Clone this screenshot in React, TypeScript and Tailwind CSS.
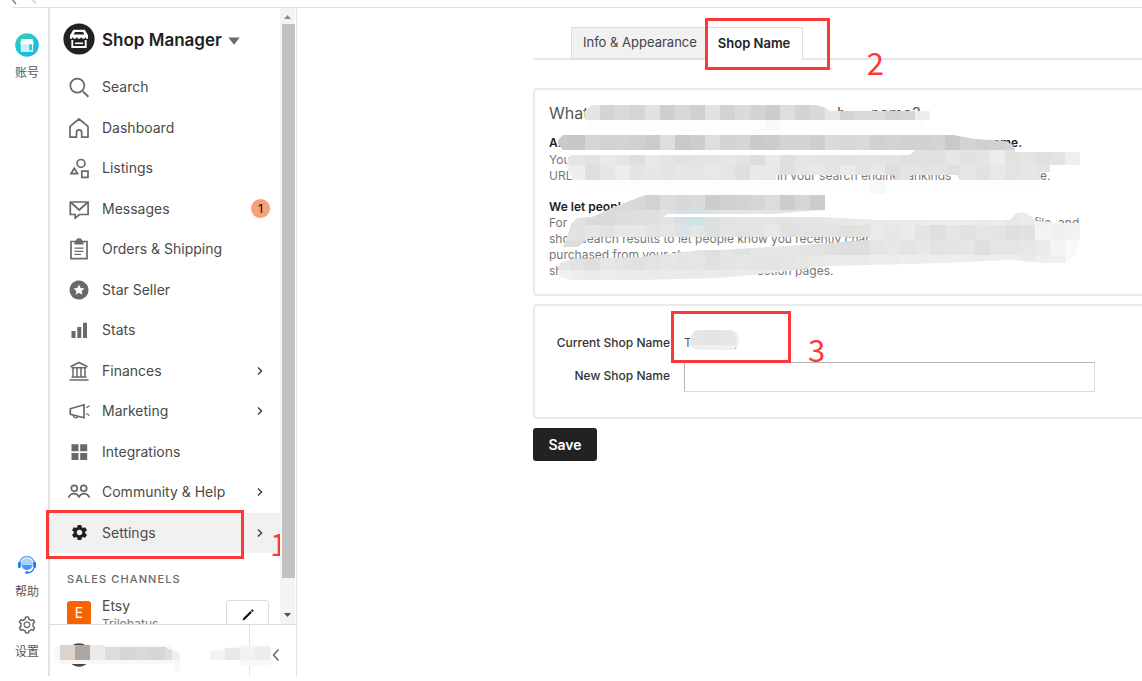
import type { ReactNode } from "react";
import { MdSettings } from "react-icons/md";
import { AiOutlineSetting } from "react-icons/ai";

function Icon({ children }: { children: ReactNode }) {
  return (
    <svg
      viewBox="0 0 24 24"
      className="size-6 shrink-0 text-[#696969]"
      fill="none"
      stroke="currentColor"
      strokeWidth="1.7"
      aria-hidden="true"
    >
      {children}
    </svg>
  );
}

const starPoints = "12,6.4 13.6,10 17.5,10.4 14.6,13 15.4,16.8 12,14.8 8.6,16.8 9.4,13 6.5,10.4 10.4,10";

const navItems: { label: string; icon: ReactNode; more?: boolean; badge?: number; active?: boolean }[] = [
  {
    label: "Search",
    icon: (
      <Icon>
        <circle cx="10.3" cy="10.6" r="7" />
        <path d="M15.8 16.4 21.4 21.8" strokeWidth="2" />
      </Icon>
    ),
  },
  {
    label: "Dashboard",
    icon: (
      <Icon>
        <path d="M3 10.4 12 3l9 7.4V21.2h-6.300V16.500a2.600 2.600 0 0 0-5.200 0v4.700H3z" strokeLinejoin="round" />
      </Icon>
    ),
  },
  {
    label: "Listings",
    icon: (
      <Icon>
        <circle cx="14" cy="7.400" r="3.900" />
        <path d="M7.300 12.200 10.600 17.700H4z" />
        <path d="M14.800 15.200h6.200v6.200h-6.200z" />
      </Icon>
    ),
  },
  {
    label: "Messages",
    badge: 1,
    icon: (
      <Icon>
        <path d="M3.300 5h17.800v12.500h-8.600L8.200 21v-3.500H3.300z" />
        <path d="m4 5.500 8.200 7.500 8.200-7.500" />
      </Icon>
    ),
  },
  {
    label: "Orders & Shipping",
    icon: (
      <Icon>
        <path d="M4 4.500h16v17.200H4z" />
        <path d="M7.500 7.500V4.800h2a2.600 2.600 0 0 1 5 0h2v2.700z" fill="currentColor" stroke="none" />
        <path d="M9.500 4.600a2.500 2.500 0 0 1 5 0" />
        <path d="M7.500 11.200h9M7.500 14.300h9M7.500 17.300h6.500" strokeWidth="1.300" />
      </Icon>
    ),
  },
  {
    label: "Star Seller",
    icon: (
      <Icon>
        <circle cx="12" cy="12" r="8.200" fill="currentColor" stroke="none" />
        <circle cx="12" cy="12" r="8.200" strokeWidth="2.600" strokeDasharray="3.200 1.090" strokeLinecap="round" />
        <polygon points={starPoints} fill="#fff" stroke="none" />
      </Icon>
    ),
  },
  {
    label: "Stats",
    icon: (
      <Icon>
        <path d="M4.500 13h4v7h-4zM10.300 9h4v11h-4zM16 4.800h4V20h-4z" fill="currentColor" stroke="none" />
      </Icon>
    ),
  },
  {
    label: "Finances",
    more: true,
    icon: (
      <Icon>
        <path d="M3.500 7.800 12 3.500l8.500 4.300" />
        <path d="M4.500 8.800h15M6 9v8.500M10 9v8.500M14 9v8.500M18 9v8.500M4.500 18h15M2.500 21h19" strokeWidth="1.500" />
      </Icon>
    ),
  },
  {
    label: "Marketing",
    more: true,
    icon: (
      <Icon>
        <path d="M3.300 9.800 17 5.800v12.900L3.300 15.300z" />
        <path d="M6.200 16.500a2.600 2.600 0 0 0 4.900 1M19.300 8.800l3.200-2M19.300 14.500l3.200 2" strokeWidth="1.300" />
      </Icon>
    ),
  },
  {
    label: "Integrations",
    icon: (
      <Icon>
        <path
          d="M4.500 4.300h7v6.900h-7zM13.200 4.300h7v6.900h-7zM4.500 13h7v6.900h-7zM13.200 13h7v6.900h-7z"
          fill="currentColor"
          stroke="none"
        />
      </Icon>
    ),
  },
  {
    label: "Community & Help",
    more: true,
    icon: (
      <Icon>
        <circle cx="7.300" cy="8.300" r="3" />
        <circle cx="16.700" cy="8.300" r="3" />
        <path d="M1.500 17.600c1.200-2.800 3.500-4 5.600-4s3.800 1.200 4.900 3.200c1.100-2 2.800-3.200 4.900-3.200s4.400 1.200 5.600 4" />
      </Icon>
    ),
  },
  {
    label: "Settings",
    more: true,
    active: true,
    icon: (
      <span className="flex size-6 shrink-0 items-center justify-center text-[#1f1f1f]">
        <MdSettings className="size-[19px]" aria-hidden="true" />
      </span>
    ),
  },
];

/* Pixelated strokes: rows of 15px tiles starting at x, cut to a hand-drawn outline. */
type TileRow = { x: number; y: number; tones: string[] };

const titleTiles: TileRow = {
  x: 585, y: 105,
  tones: ["e3e5e2", "d4d4d3", "dcdad9", "d5d6d4", "e1e3e2", "cfcfcf", "d8d8d8", "d0d0cf", "e1e2e1", "d3d3d3", "d9dcdb", "d3d3d3", "cdcdcc", "dedede", "d3d3d3", "d8d8d8", "e5e5e5", "d4d4d2", "dadcda", "d9dad9", "d2d2d1", "d4d5d5", "eeeeee"],
};

const bodyTiles: TileRow[] = [
  { x: 555, y: 135, tones: ["c9c9cb", "c5c8c6", "d8d6d5", "d2d2d3", "d3d2d5", "d0d0d2", "cbcbcc", "dedede", "c9c9c9", "cbcecc", "dedede", "d3d3d3", "d6d6d6", "cacaca", "cccccc", "d3d3d3", "d6d4d3", "cfcfcf", "dbdbdb", "d6d8d7", "d9dad9", "d1d0d2", "d4d4cf", "d1d1d0", "d2d0d0", "d4d4d4", "c9c9cd", "d3d3d3", "d0d0d0", "d1d1d1", "d3d3d3"] },
  { x: 555, y: 150, tones: ["ebebea", "e5e5e4", "e2e4e3", "e8eaea", "e5e6e4", "dedede", "e8e8e8", "e5e5e5", "e3e3e3", "e4e4e4", "e4e4e3", "e7e7e7", "e4e4e4", "dededc", "e8eaea", "e0e0df", "e5e5e5", "e4e4e3", "e4e4e4", "e2e2e2", "e4e4e4", "e4e4e4", "e3e3e3", "e0e0e0", "e1e1e1", "e0e0e1", "e6e7e7", "e2e2e2", "e4e4e4", "ececec", "e2e2e0", "e4e4e3", "e0e0e0", "e3e3e3", "efefee"] },
  { x: 555, y: 165, tones: ["efefee", "eeeeec", "dededf", "e6e6e6", "ececea", "e4e4e3", "e6e6e6", "e4e5e3", "e7e7e6", "e5e5e5", "e8e8e6", "e5e5e5", "dde0e0", "e8eaea", "e8e8e8", "dfdfdd", "e6e6e6", "e8e8e8", "e4e4e4", "ebebe9", "e4e4e3", "e8eaea", "deded9", "e4e4e4", "e2e4e3", "e5e5e5", "e0e0dd", "e6e6e6", "e2e2e1", "e8e8e8", "e3e3e3", "e6e6e4", "e4e4e4"] },
  { x: 555, y: 195, tones: ["dddddd", "dddddd", "dddddd", "dcdcdc", "dadada", "d7d7d7", "d2d2d5", "dcdcdc", "d8d8d8", "dadcda", "cccccc", "d0d0d0", "d2d2d2", "d4d6d4", "dcdcdc", "cccccc", "d5d5d5", "cbcbcc"] },
  { x: 555, y: 210, tones: ["e7e7e7", "e2e2e2", "dadada", "dbdbdb", "dddddd", "dedede", "dfdfdf", "e3e3e3", "d4e0e2", "cee3e6", "dde1e1", "e2e2e2", "e5e5e3", "e5e5e5", "e4e4e4", "e3e3e3", "e5e5e5", "e6e6e6", "e8e8e8", "e7e7e7", "e9e9e9", "e9e9e9", "ebebeb", "ebebeb", "ebebeb", "ececec", "ececec", "ececec", "ebebeb", "ececec", "e8e8e8", "ebebeb", "f0f0f0", "f1f1f1", "f2f2f2"] },
  { x: 555, y: 225, tones: ["e3e3e3", "e2e2e2", "e5e5e5", "e2e2e2", "e7e7e6", "e8e8e8", "e4e4e4", "e6e6e6", "dce3e4", "e0e6e5", "dce0df", "e4e6e6", "e2e2e2", "e4e4e4", "e8e8e8", "e1e1e1", "e2e2e2", "e3e3e3", "e3e3e3", "e0e0e0", "e2e2de", "eaeaea", "e6e7e7", "ebebe9", "e4e4e4", "dedfdf", "e5e5e5", "e1e1e1", "e5e5e5", "e4e4e4", "dfdfe0", "e1e1df", "f1f4f4", "f0f0ef", "f3f3f3"] },
  { x: 555, y: 240, tones: ["dddddd", "dedede", "e2e2e2", "e4e4e4", "e6e6e6", "e5e5e5", "e6e6e6", "e8e8e8", "e6e6e6", "e4e4e4", "dedede", "e4e4e4", "e1e1e0", "e5e5e4", "e7e7e7", "e6e6e6", "e4e4e4", "e3e3e3", "dfdfdf", "dddddd", "dedede", "e5e5e5", "e7e7e6", "e4e4e4", "e7e7e7", "e3e3e3", "e4e4e4", "e6e6e6", "dedfdf", "e5e6e6", "e4e5e5", "e6e7e7", "eaeaea", "f4f4f4", "f9f9f9"] },
  { x: 555, y: 255, tones: ["e6e6e6", "e2e2e2", "dededd", "e6e6e6", "e3e3e3", "e0e0e0", "e3e3e3", "e6e6e6", "e4e4e3", "e6e6e6", "e1e1e1", "e4e4e4", "e6e6e6", "e4e4e4", "e4e4e4", "e5e5e5", "e7e7e6", "e8e8e8", "eaeaea", "ebebe9", "eaeaea", "ecedec", "ececea", "eeeeed", "ecedec", "ededed", "eeeeed", "ecedec", "ededed", "eceded", "ecedec", "eaeae8", "eeeeee", "efefed", "f8f8f8"] },
  { x: 555, y: 270, tones: ["f0f0f0", "eeeeed", "eaeaea", "ecedec", "eaebea", "ebebeb", "ebecea", "e9eae9", "ebebe9", "eceae9", "ebebe9", "e9e9e8", "ebebeb", "e9e9e8", "efefef", "f0f0f0", "f2f2f2", "f2f2f2"] },
];

function Tiles({ rows }: { rows: TileRow[] }) {
  return (
    <>
      {rows.map((row) =>
        row.tones.map((tone, i) => (
          <rect key={`${row.y}-${i}`} x={row.x + i * 15} y={row.y} width="15" height="15" fill={`#${tone}`} />
        )),
      )}
    </>
  );
}

function NoticeMosaic() {
  return (
    <svg
      viewBox="533 88 609 208"
      className="pointer-events-none absolute top-0 left-0 h-[208px] w-[609px]"
      shapeRendering="crispEdges"
      aria-hidden="true"
    >
      <defs>
        <clipPath id="title-stroke">
          <path d="M592 105H816L826 108 830 111H930V120H585V111z" />
        </clipPath>
        <clipPath id="body-stroke">
          <path d="M563 135H953L975 139 1005 141 1013 145 1015 150V152H1080V165H1050V172H1040V180H960L957 175H910V180H895V175H776V180H573L566 165 570 155H910L915 150H563L558 144V140z" />
          <path d="M645 195H825V210L770 214H668L663 217H820L862 219 875 220H1010L1015 214 1022 212 1028 214 1037 221 1060 223H1080V240L1075 255 1065 263 1045 263 1010 260 945 263 830 266 760 274 720 278 640 280H572L560 277 558 270 560 263 572 259 640 257 700 250H720L800 245 870 240V237H590L578 247 563 247 566 240 571 224 577 218 592 217 614 207z" />
        </clipPath>
      </defs>
      <path d="M588 120H925V131H588zM575 180H1040V190H575zM843 106H872V111H843z" fill="#fdfdfd" />
      <path d="M765 120h15v10h-15zM870 180h15v14h-15z" fill="#f8f8f8" />
      <g clipPath="url(#title-stroke)">
        <Tiles rows={[titleTiles]} />
      </g>
      <g clipPath="url(#body-stroke)">
        <Tiles rows={bodyTiles} />
      </g>
    </svg>
  );
}

function Highlight({ className }: { className: string }) {
  return <span className={`pointer-events-none absolute z-10 border-3 border-[#fc3838] ${className}`} />;
}

function StepNumber({ value, className }: { value: number; className: string }) {
  return (
    <span
      className={`pointer-events-none absolute z-10 font-['Noto_Sans_CJK_SC',sans-serif] text-[31px] leading-8 font-normal text-[#fc3838] ${className}`}
    >
      {value}
    </span>
  );
}

function Rail() {
  return (
    <aside className="flex w-12 shrink-0 flex-col items-center pt-[25px] pb-[17px] pl-1.5 font-['Noto_Sans_CJK_SC',sans-serif] text-xs leading-4 text-[#555]">
      <a href="#account" className="flex flex-col items-center gap-[7px]">
        <svg viewBox="0 0 24 24" className="size-6" aria-hidden="true">
          <defs>
            <linearGradient id="account" x1="0" y1="0" x2="0.6" y2="1">
              <stop offset="0" stopColor="#30d3b0" />
              <stop offset="1" stopColor="#18b9ec" />
            </linearGradient>
          </defs>
          <circle cx="12" cy="12" r="11.800" fill="url(#account)" />
          <path d="M6.500 6h11l1.200 4.500H5.300z" fill="#fff" />
          <path d="M6.500 11v7h11v-7" fill="none" stroke="#e9fbfd" strokeWidth="1.300" />
          <path d="M7 10.500h7.300V18H7z" fill="#c9f1f5" />
          <path d="M5.300 10.500h13.400" stroke="#fff" strokeWidth="1.500" />
        </svg>
        账号
      </a>
      <a href="#help" className="mt-auto flex flex-col items-center gap-2">
        <svg viewBox="0 0 20 20" className="size-5" aria-hidden="true">
          <path d="M2.500 9a7.500 7.500 0 0 1 15 0" fill="none" stroke="#62a5f8" strokeWidth="1.500" />
          <rect x="1" y="7" width="2.800" height="6" rx="1.300" fill="#1f78f4" />
          <rect x="16.200" y="7" width="2.800" height="6" rx="1.300" fill="#1f78f4" />
          <circle cx="10" cy="9.300" r="6" fill="#a9d0ff" />
          <path d="M5 10h10a5 5 0 0 1-10 0z" fill="#4a94f7" />
          <path d="M17 13c-1 3-3 4.500-6 4.700" fill="none" stroke="#1f78f4" strokeWidth="1.200" />
          <rect x="8.300" y="16.300" width="3.600" height="2.500" rx="1.200" fill="#1f78f4" />
        </svg>
        帮助
      </a>
      <a href="#preferences" className="mt-4 flex flex-col items-center gap-2">
        <AiOutlineSetting className="size-5 text-[#666]" aria-hidden="true" />
        设置
      </a>
    </aside>
  );
}

function Chevron() {
  return (
    <svg viewBox="0 0 8 10" className="h-[10px] w-2" fill="none" stroke="#444" strokeWidth="1.500" aria-hidden="true">
      <path d="m2 1.500 3.600 3.500L2 8.500" />
    </svg>
  );
}

function Sidebar() {
  return (
    <div className="flex w-[249px] shrink-0 flex-col border-r border-l-2 border-[#e2e2e2]">
      <div className="flex min-h-0 flex-1 pr-px">
        <div className="flex min-w-0 flex-1 flex-col">
          <button type="button" className="flex h-[59px] shrink-0 items-center gap-1.5 pt-[3px] pl-[13px]">
            <svg viewBox="0 0 32 32" className="size-8 shrink-0" aria-hidden="true">
              <circle cx="16" cy="16" r="15.600" fill="#222" />
              <path d="M10.300 6.800h11.400l3.300 5.400v3.600H7v-3.600z" fill="#fff" />
              <path d="M12 9h8l1.400 2.600H10.600z" fill="#222" />
              <path d="M9.300 17v7h13.400v-7" fill="none" stroke="#fff" strokeWidth="1.900" />
              <path d="M9.500 14.500a2 2 0 0 0 4.300 0 2.200 2.200 0 0 0 4.400 0 2 2 0 0 0 4.300 0" fill="none" stroke="#222" strokeWidth="1.100" />
              <path d="M12 20.300h8" stroke="#fff" strokeWidth="1.600" />
            </svg>
            <span className="pt-1 pl-px text-[17px] font-semibold text-[#222]">Shop Manager</span>
            <svg viewBox="0 0 12 8" className="mt-[3px] h-2 w-3" aria-hidden="true">
              <path d="M.3.500h11.400L6 7.700z" fill="#696969" />
            </svg>
          </button>
          <nav className="grid h-[486px] shrink-0 auto-rows-fr">
            {navItems.map((item) => (
              <a
                key={item.label}
                href="#nav"
                className={`relative flex items-center gap-[11px] pr-4 pl-[17px] text-sm text-[#4a4a4a] ${item.active ? "bg-[#f1f1f1]" : ""}`}
              >
                {item.icon}
                <span className="flex-1 whitespace-nowrap">{item.label}</span>
                {item.more && <Chevron />}
                {item.badge && (
                  <span className="-mr-1.5 flex size-[19px] items-center justify-center rounded-full bg-[#f99f79] text-xs font-medium text-[#222]">
                    {item.badge}
                  </span>
                )}
                {item.active && (
                  <>
                    <Highlight className="-top-[3px] -left-1 h-[49px] w-[198px]" />
                    <StepNumber value={1} className="top-[14px] right-0 w-[10px] overflow-hidden" />
                  </>
                )}
              </a>
            ))}
          </nav>
          <div className="min-h-0 flex-1 overflow-hidden pt-[18px]">
            <h2 className="pl-[17px] text-[11px] leading-4 font-medium tracking-widest text-[#696969]">SALES CHANNELS</h2>
            <div className="flex items-start pt-2.5 pr-[11px] pl-[17px]">
              <span className="mt-1 flex size-6 items-center justify-center rounded-[3px] bg-[#f56400] text-sm text-white">E</span>
              <a href="#etsy" className="ml-[11px] flex-1 text-sm leading-[18px] text-[#4a4a4a]">
                <span className="block">Etsy</span>
                <span className="block text-xs leading-[18px] text-[#777]">Trilobatus</span>
              </a>
              <button
                type="button"
                aria-label="Edit shop"
                className="mt-[3px] flex h-[30px] w-[43px] items-center justify-center rounded-[3px] border border-[#dcdcdc]"
              >
                <svg viewBox="0 0 14 14" className="size-[14px]" aria-hidden="true">
                  <path d="M1.500 12.500 2.300 10 9.500 3 11 4.500 3.800 11.700zM10 2.300l1.200-1.100 1.700 1.600-1.200 1.100z" fill="#111" />
                </svg>
              </button>
            </div>
          </div>
        </div>
        <div className="flex w-[15px] shrink-0 flex-col items-center bg-[#f3f3f3]">
          <svg viewBox="0 0 15 16" className="h-4 w-[15px]" aria-hidden="true">
            <path d="M4 11 7.500 7 11 11z" fill="#8a8a8a" />
          </svg>
          <div className="ml-px h-[554px] w-[13px] bg-[#c1c1c1]" />
          <svg viewBox="0 0 15 16" className="mt-auto mb-px h-4 w-[15px]" aria-hidden="true">
            <path d="M4 6h7L7.500 10z" fill="#4d4d4d" />
          </svg>
        </div>
      </div>
      <div className="relative flex h-[52px] shrink-0 border-t border-[#dcdcdc]">
        <div className="flex-1" />
        <button type="button" aria-label="Collapse menu" className="flex w-[47px] items-center border-l border-[#e2e2e2] pt-2 pl-[17px]">
          <svg viewBox="0 0 14 14" className="size-[14px]" fill="none" stroke="#666" strokeWidth="1.600" aria-hidden="true">
            <path d="M5 1v12M11.500 1.500 6.500 7l5 5.500" />
          </svg>
        </button>
        <svg viewBox="50 625 225 50" className="pointer-events-none absolute top-0 left-0 h-[50px] w-[225px]" aria-hidden="true">
          <circle cx="79" cy="655" r="11.700" fill="#4a4743" />
          <g shapeRendering="crispEdges">
            <path d="M53 650 60 645H170L180 654V671H175V664H60L54 657zM244 645H268L273 650V663L265 666H240V660H210V651z" fill="#f8f8f8" />
            <path d="M60 645h15v15H60z" fill="#ddd3cd" />
            <path d="M75 645h15v15H75z" fill="#aca7a3" />
            <path d="M90 645h15v15H90z" fill="#ebebeb" />
            <path d="M105 647h15v13h-15z" fill="#dcdcda" />
            <path d="M120 647h45v13h-45z" fill="#d4d7d6" />
            <path d="M135 647h15v13h-15z" fill="#d8dad8" />
            <path d="M165 647 172 650V660H165z" fill="#dedede" />
            <path d="M172 650 180 654V660H172z" fill="#eeeeee" />
            <path d="M210 651h15v9h-15z" fill="#f4f2ef" />
            <path d="M225 648h15v12h-15z" fill="#e8e8e7" />
            <path d="M240 647h15v13h-15z" fill="#f2f2f2" />
            <path d="M255 647h15v13h-15z" fill="#ebecec" />
          </g>
        </svg>
      </div>
    </div>
  );
}

function Main() {
  return (
    <main className="min-w-0 flex-1 overflow-hidden pt-[19px] pl-[236px]">
      <div className="flex h-[33px] items-stretch text-[13px]">
        <span className="w-[38px] border-b-2 border-[#e8e8e8]" />
        <a
          href="#info"
          className="flex items-center border-t border-b-2 border-l border-[#dedede] bg-[#f1f1f1] pr-2 pl-[11px] whitespace-nowrap text-[#444]"
        >
          Info &amp; Appearance
        </a>
        <a
          href="#name"
          className="relative flex items-center border-x border-t border-[#dedede] px-3 font-semibold whitespace-nowrap text-[#222]"
        >
          Shop Name
          <Highlight className="-top-[10px] -left-px h-[52px] w-[125px]" />
          <StepNumber value={2} className="top-[18px] left-[161px]" />
        </a>
        <span className="flex-1 border-b-2 border-[#e8e8e8]" />
      </div>

      <section className="relative mt-7 h-[208px] overflow-hidden rounded-l border-y-2 border-l-2 border-[#ebebeb] pt-[13px] pl-[14px] text-xs leading-4 whitespace-nowrap text-[#777]">
        <h1 className="flex text-base leading-5 text-[#555]">
          <span className="w-[288px]">What</span>
          <span>hop name?</span>
        </h1>
        <p className="mt-3 flex font-semibold text-[#222]">
          <span className="w-[437px]">A.</span>
          <span>name.</span>
        </p>
        <p className="mt-px">You</p>
        <p className="flex">
          <span className="w-[228px]">URLs</span>
          <span className="w-[263px]">in your search engine rankings</span>
          <span>e.</span>
        </p>
        <p className="mt-[15px] font-semibold text-[#222]">We let people</p>
        <p className="flex">
          <span className="w-[485px]">For</span>
          <span>file, and</span>
        </p>
        <p>shop search results to let people know you recently chan</p>
        <p>purchased from your sh</p>
        <p className="flex">
          <span className="w-[208px]">sh</span>
          <span>action pages.</span>
        </p>
      </section>
      <div className="relative">
        <div className="absolute -top-[208px] left-0">
          <div className="relative h-[208px] w-[609px]">
            <NoticeMosaic />
          </div>
        </div>
      </div>

      <form onSubmit={(event) => event.preventDefault()}>
        <div className="mt-2 flex flex-col rounded-l border-y-2 border-l-2 border-[#ebebeb] pt-[22px] pr-[47px] pb-[25px] text-xs font-medium text-[#333]">
          <div className="flex h-[30px] items-center gap-[14px]">
            <span className="w-[135px] text-right whitespace-nowrap">Current Shop Name</span>
            <span className="relative flex h-[30px] w-[60px] items-center font-normal text-[#555]">
              <span className="w-[50px]">T.</span>
              <span>,</span>
              <svg viewBox="0 0 50 20" className="pointer-events-none absolute top-[2px] left-[6px] h-5 w-[50px]" aria-hidden="true">
                <rect width="49" height="20" rx="9" fill="#f0f0f0" />
                <path d="M7 0H40Q47 3 47 15H0Q0 3 7 0z" fill="#e6e6e6" />
                <path d="M15 0h15v15H15z" fill="#e3e3e3" />
              </svg>
              <Highlight className="-top-[17px] -left-[13px] h-[52px] w-[120px]" />
              <StepNumber value={3} className="top-[5px] left-[124px]" />
            </span>
          </div>
          <div className="mt-1 flex items-center gap-[14px]">
            <label htmlFor="shop-name" className="w-[135px] pb-0.5 text-right whitespace-nowrap">
              New Shop Name
            </label>
            <input
              id="shop-name"
              type="text"
              className="h-[30px] min-w-0 flex-1 border border-t-[#b5b5b5] border-r-[#dcdcdc] border-b-[#dcdcdc] border-l-[#b5b5b5] px-2 outline-none"
            />
          </div>
        </div>
        <button type="submit" className="mt-[9px] h-[33px] w-16 rounded-[3px] bg-[#222] text-sm font-semibold text-white">
          Save
        </button>
      </form>
    </main>
  );
}

export default function App() {
  return (
    <div className="flex h-screen flex-col bg-white pb-[5px] font-[Inter,sans-serif]">
      <header className="ml-3 h-2 shrink-0 border-b border-[#dedede]">
        <svg viewBox="12 0 28 5" className="h-[5px] w-7" fill="none" aria-hidden="true">
          <path d="M12.500 0 16 4" stroke="#777" strokeWidth="1.300" />
          <path d="M32.500 0 36 3.500" stroke="#ccc" strokeWidth="1.300" />
        </svg>
      </header>
      <div className="flex min-h-0 flex-1">
        <Rail />
        <Sidebar />
        <Main />
      </div>
    </div>
  );
}
